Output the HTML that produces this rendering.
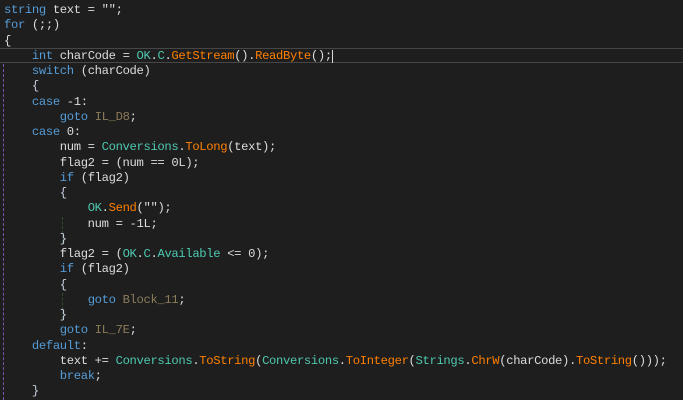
<!DOCTYPE html>
<html><head><style>
html,body{margin:0;padding:0;background:#1e1e1e;width:683px;height:400px;overflow:hidden}
pre{margin:0;position:absolute;top:3px;left:4px;font-family:"Liberation Mono",monospace;font-size:12.2px;letter-spacing:-0.34px;line-height:15.25px;color:#dcdcdc}
.k{color:#569cd6}.t{color:#4ec9b0}.m{color:#ff8000}.l{color:#8b7b5a}.b{color:#c8cfe0}
.cur{position:absolute;left:0;top:48px;width:683px;height:15px;border-top:1px solid #464646;border-bottom:1px solid #464646;box-sizing:border-box}
.g{position:absolute;left:3px;top:64px;height:336px;border-left:1px dashed #7a55a8}
.g2{position:absolute;left:62px;height:26px;border-left:1px dashed #2f4a2f}
.caret{position:absolute;left:332px;top:50px;width:1px;height:13px;background:#dcdcdc}
</style></head><body>
<div class="cur"></div><div class="g"></div>
<div class="g2" style="top:217px"></div><div class="g2" style="top:293px"></div>
<div class="caret"></div>
<pre><span class="k">string</span> text = "";
<span class="k">for</span> (;;)
{
    <span class="k">int</span> charCode = <span class="t">OK</span>.<span class="t">C</span>.<span class="m">GetStream</span>().<span class="m">ReadByte</span>();
    <span class="k">switch</span> (charCode)
    <span class="b">{</span>
    <span class="k">case</span> -1:
        <span class="k">goto</span> <span class="l">IL_D8</span>;
    <span class="k">case</span> 0:
        num = <span class="t">Conversions</span>.<span class="m">ToLong</span>(text);
        flag2 = (num == 0L);
        <span class="k">if</span> (flag2)
        <span class="b">{</span>
            <span class="t">OK</span>.<span class="m">Send</span>("");
            num = -1L;
        <span class="b">}</span>
        flag2 = (<span class="t">OK</span>.<span class="t">C</span>.<span class="t">Available</span> &lt;= 0);
        <span class="k">if</span> (flag2)
        <span class="b">{</span>
            <span class="k">goto</span> <span class="l">Block_11</span>;
        <span class="b">}</span>
        <span class="k">goto</span> <span class="l">IL_7E</span>;
    <span class="k">default</span>:
        text += <span class="t">Conversions</span>.<span class="m">ToString</span>(<span class="t">Conversions</span>.<span class="m">ToInteger</span>(<span class="t">Strings</span>.<span class="m">ChrW</span>(charCode).<span class="m">ToString</span>()));
        <span class="k">break</span>;
    <span class="b">}</span></pre>
</body></html>
